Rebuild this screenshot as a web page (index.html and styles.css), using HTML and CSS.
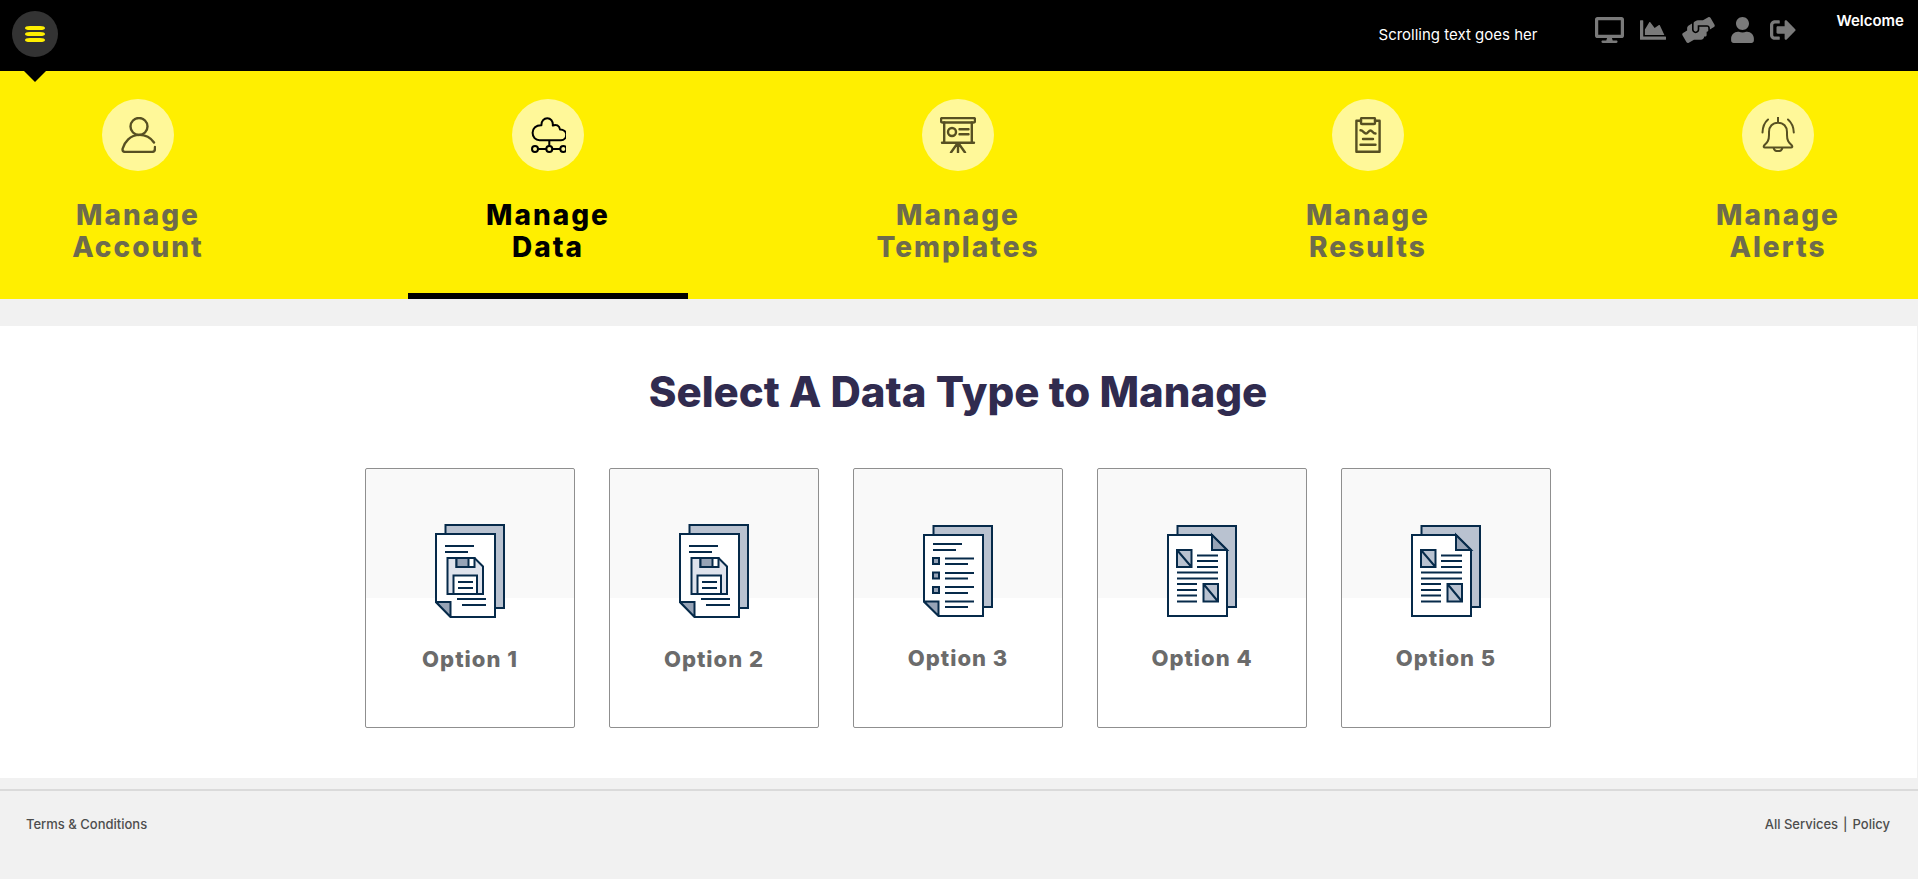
FILE: index.html
```html
<!DOCTYPE html>
<html lang="en">
<head>
<meta charset="utf-8">
<meta name="viewport" content="width=device-width, initial-scale=1">
<title>Manage Data</title>
<link rel="stylesheet" href="styles.css">
</head>
<body>
<header class="topbar">
  <button class="menu" type="button" aria-label="Menu"><span class="bar"></span><span class="bar"></span><span class="bar"></span></button>
  <p class="ticker">Scrolling text goes her</p>
  <div class="tools">
    <a href="#" aria-label="Desktop"><svg width="29" height="26" viewBox="0 0 576 512"><path d="M528 0H48C21.5 0 0 21.5 0 48v320c0 26.5 21.5 48 48 48h192l-16 48h-72c-13.3 0-24 10.7-24 24s10.7 24 24 24h272c13.3 0 24-10.7 24-24s-10.7-24-24-24h-72l-16-48h192c26.5 0 48-21.5 48-48V48c0-26.5-21.5-48-48-48zm-16 352H64V64h448v288z"/></svg></a>
    <a href="#" aria-label="Charts"><svg width="26" height="26" viewBox="0 0 512 512"><path d="M500 384c6.600 0 12 5.400 12 12v40c0 6.600-5.400 12-12 12H12c-6.600 0-12-5.400-12-12V76c0-6.600 5.400-12 12-12h40c6.600 0 12 5.400 12 12v308h436zM372.700 159.500L288 216l-85.300-113.700c-5.100-6.800-15.500-6.300-19.900 1L96 248v104h384l-89.900-187.800c-3.200-6.500-11.400-8.700-17.400-4.700z"/></svg></a>
    <a href="#" aria-label="Support"><svg width="33" height="26" viewBox="0 0 640 512"><path d="M488 192H336v56c0 39.700-32.300 72-72 72s-72-32.300-72-72V126.400l-64.900 39C107.800 176.900 96 197.800 96 220.200v47.300l-80 46.200C.7 322.500-4.600 342.100 4.300 357.400l80 138.600c8.800 15.300 28.400 20.500 43.700 11.700L231.400 448H368c35.300 0 64-28.700 64-64h16c17.700 0 32-14.300 32-32v-64h8c13.300 0 24-10.700 24-24v-48c0-13.300-10.700-24-24-24zm147.700-37.400L555.700 16C546.900.7 527.300-4.500 512 4.300L408.600 64H306.400c-12 0-23.700 3.400-33.900 9.700L239 94.600c-9.400 5.800-15 16.100-15 27.100V248c0 22.100 17.900 40 40 40s40-17.900 40-40v-88h184c30.900 0 56 25.100 56 56v28.500l80-46.200c15.300-8.900 20.500-28.400 11.700-43.700z"/></svg></a>
    <a href="#" aria-label="Profile"><svg width="23" height="26" viewBox="0 0 448 512"><path d="M224 256c70.700 0 128-57.300 128-128S294.700 0 224 0 96 57.300 96 128s57.300 128 128 128zm89.600 32h-16.700c-22.200 10.200-46.900 16-72.900 16s-50.600-5.800-72.900-16h-16.700C60.200 288 0 348.200 0 422.400V464c0 26.500 21.500 48 48 48h352c26.500 0 48-21.500 48-48v-41.600c0-74.200-60.200-134.400-134.400-134.400z"/></svg></a>
    <a href="#" aria-label="Sign out"><svg width="26" height="26" viewBox="0 0 512 512"><path d="M497 273L329 441c-15 15-41 4.500-41-17v-96H152c-13.300 0-24-10.700-24-24v-96c0-13.300 10.700-24 24-24h136V88c0-21.400 25.900-32 41-17l168 168c9.300 9.400 9.300 24.600 0 34zM192 436v-40c0-6.600-5.400-12-12-12H96c-17.700 0-32-14.300-32-32V160c0-17.700 14.300-32 32-32h84c6.600 0 12-5.400 12-12V76c0-6.600-5.400-12-12-12H96c-53 0-96 43-96 96v192c0 53 43 96 96 96h84c6.600 0 12-5.400 12-12z"/></svg></a>
  </div>
  <p class="welcome">Welcome</p>
</header>

<nav class="sections" aria-label="Sections">
  <a class="section" href="#">
    <span class="disc"><svg class="glyph" viewBox="0 0 36 36"><circle cx="19" cy="9.500" r="8.500"/><path d="M34 25.500C30.500 20.500 25 17.900 19.500 17.900C10 17.900 4.500 25 2.700 31.500C2.200 33.700 3 34.900 5 34.900H32C34.500 34.900 35 34 35 30"/></svg></span>
    <span class="name">Manage<br>Account</span>
  </a>
  <a class="section current" href="#" aria-current="page">
    <span class="disc"><svg class="glyph" viewBox="0 0 36 36"><path d="M9.500 23.200H31C34 23.200 36.200 21 36.200 17.500C36.200 14.500 33 12.200 30 12.500C29.500 8.500 26 7 22.800 8.500C23.200 4 20.500 1.200 17.300 1.200C14 1.200 11.300 4 11.400 8.200C6 8 2.600 11.500 2.600 15.700C2.600 20 5.500 23.200 9.500 23.200ZM19.300 23.200V29M8.500 32H16M22.500 32H30"/><circle cx="5" cy="32" r="3"/><circle cx="19.300" cy="32" r="3"/><circle cx="33.300" cy="32" r="3"/></svg></span>
    <span class="name">Manage<br>Data</span>
  </a>
  <a class="section" href="#">
    <span class="disc"><svg class="glyph" viewBox="0 0 36 36"><rect x="1" y="1" width="34" height="4.500" rx="1.500"/><path d="M4.200 5.500V25.700M31.800 5.500V25.700M2 25.700H34M19.500 12.300H28.500M19.500 17.300H28.500M18 26V35.500M17 27L11 35.500M19 27L25 35.500"/><circle cx="12" cy="15" r="4"/></svg></span>
    <span class="name">Manage<br>Templates</span>
  </a>
  <a class="section" href="#">
    <span class="disc"><svg class="glyph" viewBox="0 0 36 36"><path d="M11 3.800H6.400V34.800H29.600V3.800H25M10.500 13.300C13 13.300 14 16.300 16 16.600C18 16.700 18.500 13.500 20.500 13.500C22.500 13.500 22.500 16.500 25.500 16.500M13 22H23M10.500 27.700H25.500"/><rect x="11" y="1" width="14" height="6" rx="1"/></svg></span>
    <span class="name">Manage<br>Results</span>
  </a>
  <a class="section" href="#">
    <span class="disc"><svg class="glyph thin" viewBox="0 0 36 36"><path d="M18 0V5.500M18 5.700C12.500 5.700 9 9.500 9 15V18C9 24 7 25.500 4.500 28C3 29.800 3.800 30.600 5 30.600H31C32.200 30.600 33 29.800 31.500 28C29 25.500 27 24 27 18V15C27 9.500 23.500 5.700 18 5.700ZM13.500 30.700A4.600 4.300 0 0 0 22.500 30.700M8 2.500C4.500 5.500 2.700 10 2.500 15.500M28 2.500C31.500 5.500 33.600 10 33.800 15.500"/></svg></span>
    <span class="name">Manage<br>Alerts</span>
  </a>
</nav>

<main class="panel">
  <h1 class="title">Select A Data Type to Manage</h1>
  <div class="cards">
    <a class="card" href="#">
      <svg class="doc" width="70" height="94" viewBox="0 0 70 94">
        <path class="shade" d="M10.500 1H69V84H10.500Z"/><path class="paper" d="M1 10H60V93H16L1 78Z"/><path class="fold" d="M1 78H15.500V93Z"/>
        <path d="M10 22H39M10 28H33M22 75H51M27 81H51"/>
        <path class="light" d="M12.500 34H39.500L48 42.500V70H12.500Z"/><path class="paper" d="M21.500 34H39.500V43H21.500Z"/><path class="fold" d="M21.500 34H33.500V43H21.500Z"/><path class="paper" d="M18.500 51.500H42V70H18.500Z"/><path d="M23 58H38M23 64H38"/>
      </svg>
      <span class="label">Option 1</span>
    </a>
    <a class="card" href="#">
      <svg class="doc" width="70" height="94" viewBox="0 0 70 94">
        <path class="shade" d="M10.500 1H69V84H10.500Z"/><path class="paper" d="M1 10H60V93H16L1 78Z"/><path class="fold" d="M1 78H15.500V93Z"/>
        <path d="M10 22H39M10 28H33M22 75H51M27 81H51"/>
        <path class="light" d="M12.500 34H39.500L48 42.500V70H12.500Z"/><path class="paper" d="M21.500 34H39.500V43H21.500Z"/><path class="fold" d="M21.500 34H33.500V43H21.500Z"/><path class="paper" d="M18.500 51.500H42V70H18.500Z"/><path d="M23 58H38M23 64H38"/>
      </svg>
      <span class="label">Option 2</span>
    </a>
    <a class="card" href="#">
      <svg class="doc" width="70" height="92" viewBox="0 0 70 92">
        <path class="shade" d="M10.500 1H69V82H10.500Z"/><path class="paper" d="M1 10H60V91H16L1 76.500Z"/><path class="fold" d="M1 76.500H15.500V91Z"/>
        <path d="M10 19H39M10 25H33M22 33.500H51M22 39H45M22 48H51M22 53.500H45M22 62H51M22 68H45M22 76.500H51M22 82H45"/>
        <path class="fold" d="M10 33H16V39H10ZM10 47.500H16V53.500H10ZM10 62H16V68H10Z"/>
      </svg>
      <span class="label">Option 3</span>
    </a>
    <a class="card" href="#">
      <svg class="doc" width="70" height="92" viewBox="0 0 70 92">
        <path class="shade" d="M10.500 1H69V82H10.500Z"/><path class="paper" d="M1 10H45L60 25V91H1Z"/><path class="fold" d="M45 10L60 25H45Z"/>
        <path d="M30 30.500H51M30 36H51M30 42H51M10 47.500H51M10 53.500H51M10 59H30M10 65H30M10 70.500H30M10 76.500H30"/>
        <path class="shade" d="M10 25H24.500V42H10ZL24.500 42M36.500 59H51V76.500H36.500ZL51 76.500"/>
      </svg>
      <span class="label">Option 4</span>
    </a>
    <a class="card" href="#">
      <svg class="doc" width="70" height="92" viewBox="0 0 70 92">
        <path class="shade" d="M10.500 1H69V82H10.500Z"/><path class="paper" d="M1 10H45L60 25V91H1Z"/><path class="fold" d="M45 10L60 25H45Z"/>
        <path d="M30 30.500H51M30 36H51M30 42H51M10 47.500H51M10 53.500H51M10 59H30M10 65H30M10 70.500H30M10 76.500H30"/>
        <path class="shade" d="M10 25H24.500V42H10ZL24.500 42M36.500 59H51V76.500H36.500ZL51 76.500"/>
      </svg>
      <span class="label">Option 5</span>
    </a>
  </div>
</main>

<footer class="footer">
  <a href="#">Terms &amp; Conditions</a>
  <div class="legal"><a href="#">All Services</a><span>|</span><a href="#">Policy</a></div>
</footer>
</body>
</html>
```

FILE: styles.css
```css
* { box-sizing: border-box; }

body {
  margin: 0;
  background: #f1f1f1;
  font-family: Inter, "Open Sans", sans-serif;
  font-size: 15px;
  color: #4d4d4d;
}

a { color: inherit; text-decoration: none; }
p { margin: 0; }

/* Top bar */
.topbar {
  position: relative;
  display: flex;
  align-items: flex-start;
  height: 71px;
  padding: 11px 14px 0 12px;
  background: #000;
  color: #fff;
}

.topbar::after {
  content: "";
  position: absolute;
  top: 100%;
  left: 24px;
  border: 11px solid transparent;
  border-top-color: #000;
  border-bottom: 0;
}

.menu {
  display: flex;
  flex-direction: column;
  align-items: center;
  justify-content: center;
  gap: 2px;
  width: 46px;
  height: 46px;
  padding: 0;
  border: 0;
  border-radius: 50%;
  background: #333;
  cursor: pointer;
}

.bar {
  width: 20px;
  height: 4px;
  border-radius: 5px / 2px;
  background: #ffef00;
}

.ticker {
  margin-left: auto;
  padding-top: 12px;
  line-height: 24px;
  white-space: nowrap;
}

.tools {
  display: flex;
  gap: 16px;
  margin: 6px 40px 0 58px;
}

.tools svg { display: block; fill: #7a7a7a; }

.welcome {
  font-weight: 600;
  line-height: 20px;
}

/* Section navigation */
.sections {
  display: flex;
  justify-content: space-between;
  margin-left: -2px;
  background: #ffef00;
}

.section {
  display: flex;
  flex-direction: column;
  align-items: center;
  gap: 28px;
  width: 280px;
  padding: 28px 0 30px;
  border-bottom: 6px solid transparent;
  color: #6e6b4d;
}

.current {
  border-bottom-color: #000;
  color: #000;
}

.disc {
  display: grid;
  place-items: center;
  width: 72px;
  height: 72px;
  border-radius: 50%;
  background: #fff899;
}

.glyph {
  width: 36px;
  height: 36px;
  fill: none;
  stroke: #575022;
  stroke-width: 2.4;
  stroke-linecap: round;
  stroke-linejoin: round;
}

.current .glyph { stroke: #000; stroke-width: 2; }
.thin { stroke-width: 2; }

.name {
  font-size: 28px;
  font-weight: 800;
  line-height: 32px;
  letter-spacing: 2px;
  text-align: center;
}

/* Data type panel */
.panel {
  margin: 27px 1px 11px 0;
  padding: 40px 1px 50px 0;
  background: #fff;
}

.title {
  margin: 0 0 50px;
  font-size: 42px;
  font-weight: 800;
  line-height: 52px;
  text-align: center;
  color: #302b4f;
}

.cards {
  display: flex;
  flex-wrap: wrap;
  justify-content: center;
  gap: 34px;
}

.card {
  display: flex;
  flex-direction: column;
  align-items: center;
  justify-content: center;
  gap: 28px;
  width: 210px;
  height: 260px;
  border: 1px solid #8f8f8f;
  border-radius: 2px;
  background: linear-gradient(#f9f9f9 50%, #fff 50%);
}

.doc {
  fill: none;
  stroke: #062a4a;
  stroke-width: 2;
}

.shade { fill: #b9c2d0; }
.fold { fill: #96a3b6; }
.light { fill: #dfe3ec; }
.paper { fill: #fff; }

.label {
  font-size: 22px;
  font-weight: 800;
  line-height: 26px;
  letter-spacing: 1px;
  color: #6b6b6b;
}

/* Footer */
.footer {
  display: flex;
  justify-content: space-between;
  padding: 24px 28px 24px 26px;
  border-top: 2px solid #dadada;
  font-size: 13px;
  font-weight: 500;
  line-height: 18px;
}

.legal { display: flex; gap: 5px; }
```
